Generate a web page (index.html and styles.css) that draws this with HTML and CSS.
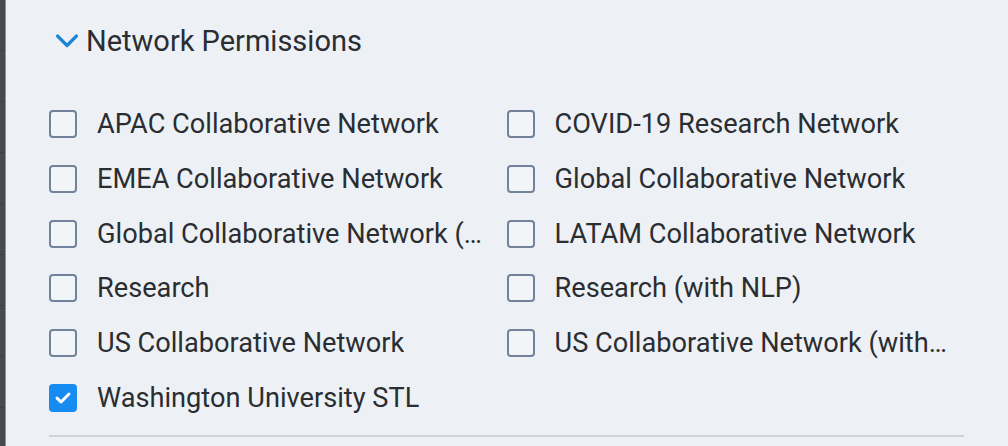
FILE: index.html
```html
<!DOCTYPE html>
<html>
<head>
<meta charset="utf-8">
<link rel="stylesheet" href="styles.css">
</head>
<body>
<div class="page">
  <div class="rail"></div>
  <main class="panel">
    <div class="section-head">
      <svg class="chevron" width="24" height="16" viewBox="0 0 24 16"><path d="M2.5 3 L12 12.5 L21.5 3" fill="none" stroke="#1d85d6" stroke-width="3.2" stroke-linecap="round" stroke-linejoin="round"/></svg>
      <span class="section-title">Network Permissions</span>
    </div>
    <div class="options">
      <label class="option"><span class="box"></span><span class="label">APAC Collaborative Network</span></label>
      <label class="option"><span class="box"></span><span class="label">COVID-19 Research Network</span></label>
      <label class="option"><span class="box"></span><span class="label">EMEA Collaborative Network</span></label>
      <label class="option"><span class="box"></span><span class="label">Global Collaborative Network</span></label>
      <label class="option"><span class="box"></span><span class="label">Global Collaborative Network (with NLP)</span></label>
      <label class="option"><span class="box"></span><span class="label">LATAM Collaborative Network</span></label>
      <label class="option"><span class="box"></span><span class="label">Research</span></label>
      <label class="option"><span class="box"></span><span class="label">Research (with NLP)</span></label>
      <label class="option"><span class="box"></span><span class="label">US Collaborative Network</span></label>
      <label class="option"><span class="box"></span><span class="label">US Collaborative Network (with NLP)</span></label>
      <label class="option"><span class="box checked"><svg width="18" height="14" viewBox="0 0 18 14"><path d="M3 7.2 L7 11 L15 3" fill="none" stroke="#fff" stroke-width="3" stroke-linecap="round" stroke-linejoin="round"/></svg></span><span class="label">Washington University STL</span></label>
    </div>
    <div class="divider"></div>
  </main>
</div>
</body>
</html>
```
FILE: styles.css
```css
html, body {
  margin: 0;
  padding: 0;
  background: #edf1f5;
}
.page {
  display: flex;
  height: 446px;
  overflow: hidden;
  font-family: Roboto, "Liberation Sans", sans-serif;
  color: #2a2d31;
}
.rail {
  width: 5px;
  flex: none;
  border-right: 1px solid #8d9095;
  background: repeating-linear-gradient(to bottom, #47494d 0, #47494d 50px, #3c3e42 50px, #3c3e42 51px);
}
.panel {
  flex: none;
  width: 915px;
  margin-left: 43px;
}
.section-head {
  display: flex;
  align-items: center;
  gap: 7px;
  padding-top: 25px;
  padding-left: 55px;
  margin-left: -49px;
  height: 32px;
}
.chevron {
  flex: none;
}
.section-title {
  font-size: 29px;
  line-height: 32px;
}
.options {
  display: grid;
  grid-template-columns: 1fr 1fr;
  grid-auto-rows: 54.8px;
  margin-top: 39.6px;
}
.option {
  display: flex;
  align-items: center;
  gap: 20px;
  min-width: 0;
  padding-right: 16px;
}
.box {
  flex: none;
  width: 24px;
  height: 24px;
  border: 2px solid #72829a;
  border-radius: 4px;
  background: #f2f5f8;
  display: flex;
  align-items: center;
  justify-content: center;
}
.box.checked {
  background: #168bf2;
  border-color: #168bf2;
}
.label {
  font-size: 27.2px;
  line-height: 32px;
  white-space: nowrap;
  overflow: hidden;
  text-overflow: ellipsis;
  min-width: 0;
}
.divider {
  height: 2px;
  background: #cfd3d7;
  margin-top: 9.6px;
}
```
